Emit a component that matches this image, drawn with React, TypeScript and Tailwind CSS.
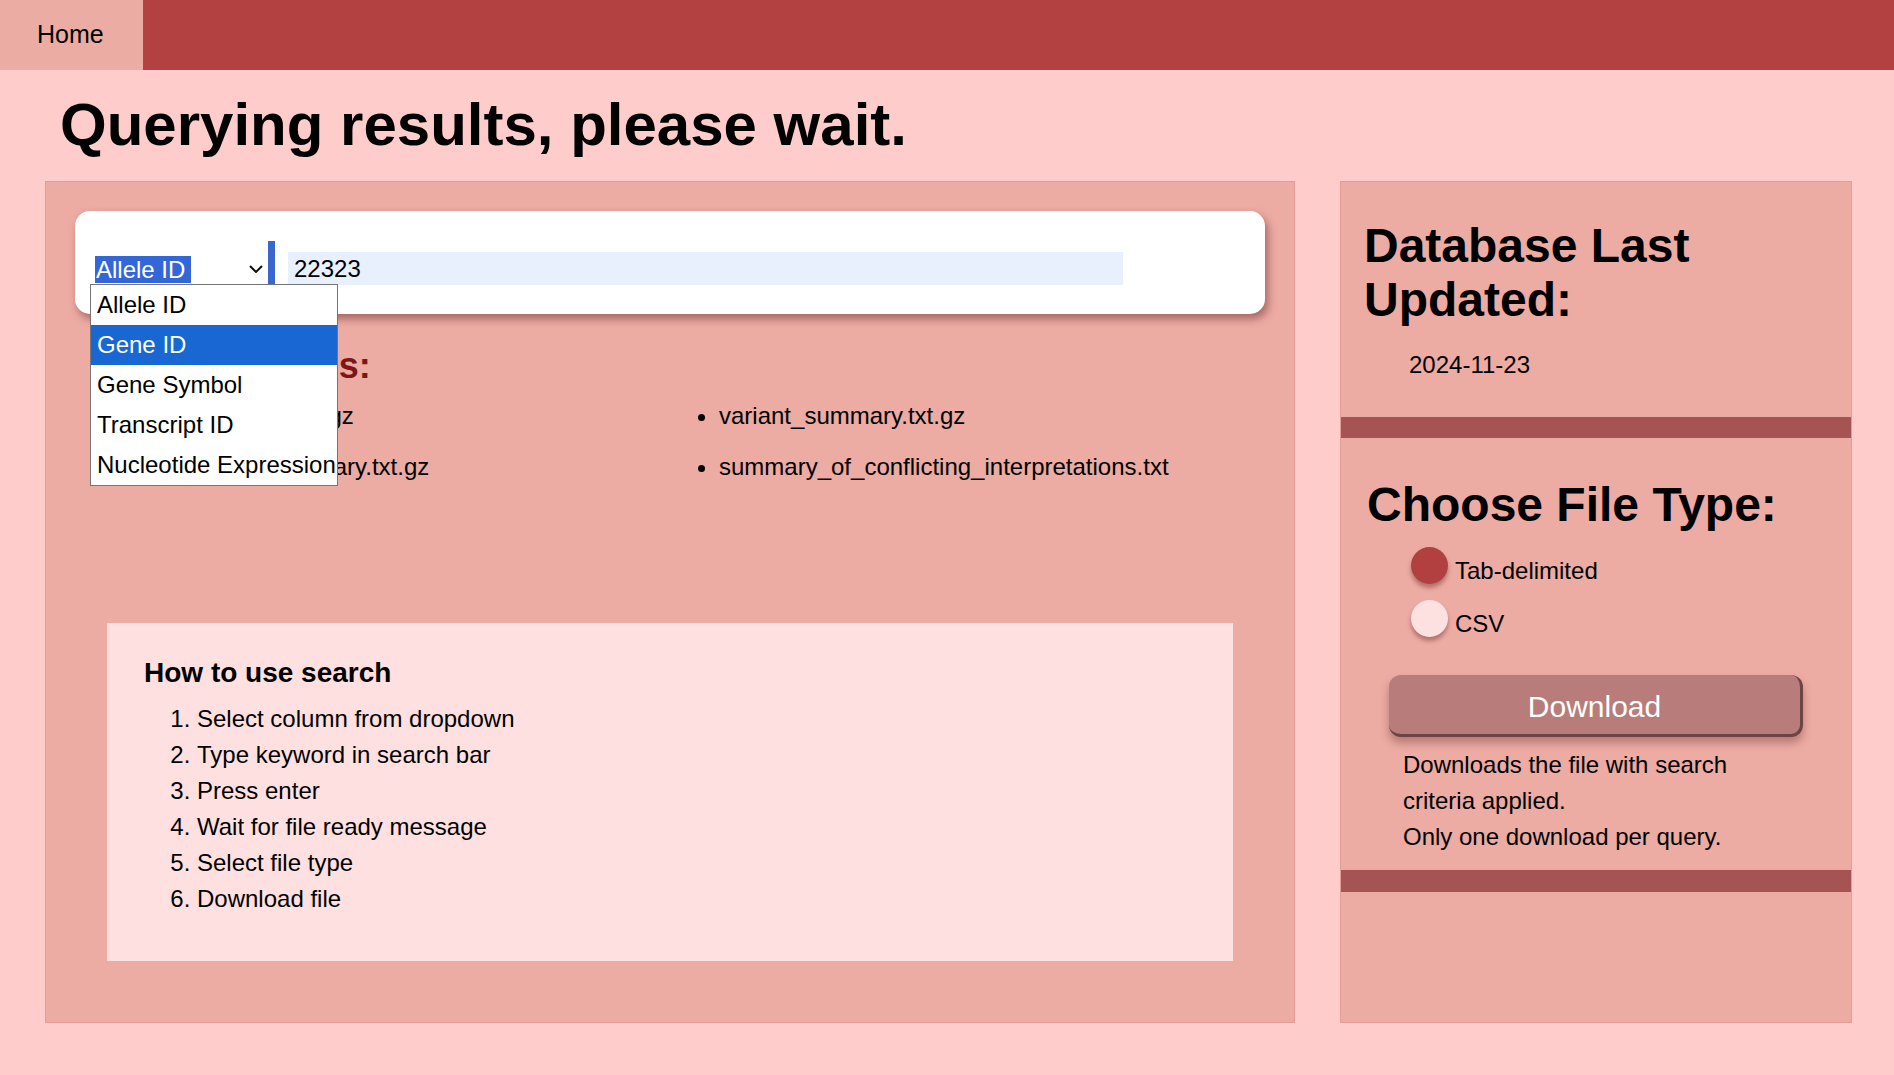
import React from "react";

const files = [
  "hgvs4variation.txt.gz",
  "variant_summary.txt.gz",
  "submission_summary.txt.gz",
  "summary_of_conflicting_interpretations.txt",
];

const columns = ["Allele ID", "Gene ID", "Gene Symbol", "Transcript ID", "Nucleotide Expression"];

const steps = [
  "Select column from dropdown",
  "Type keyword in search bar",
  "Press enter",
  "Wait for file ready message",
  "Select file type",
  "Download file",
];

function SearchCard() {
  return (
    <div className="relative bg-white rounded-[15px] shadow-[3px_5px_9px_rgba(110,50,50,0.55)] pt-[30px] pb-[19px] pl-[15px]">
      <div className="flex items-center h-[54px]">
        {/* column select, opened */}
        <div className="relative flex items-center w-[178px] h-[54px] pl-[5px]">
          <span className="bg-[#3367d6] text-white text-[24px] leading-[27px] pl-[1px] pr-[6px] mt-[2px]">Allele ID</span>
          <svg className="ml-auto mr-[5px] mt-[2px]" width="14" height="8" viewBox="0 0 14 8" fill="none">
            <path d="M1 1l6 6 6-6" stroke="#111" strokeWidth="2" />
          </svg>
          <ul className="absolute left-0 top-[43px] z-10 w-[248px] bg-white border border-[#767676]">
            {columns.map((c, i) => (
              <li
                key={c}
                className={`h-[40px] flex items-center pl-[6px] text-[24px] whitespace-nowrap ${
                  i === 1 ? "bg-[#1967d2] text-white" : "text-black"
                }`}
              >
                {c}
              </li>
            ))}
          </ul>
        </div>
        <div className="w-[7px] h-[54px] bg-[#3a66d0]" />
        <div className="ml-[13px] w-[835px] h-[33px] bg-[#e8f0fe] pl-[6px] text-[24px] leading-[33px] text-black">
          22323
        </div>
      </div>
    </div>
  );
}

function Radio({ label, checked }: { label: string; checked?: boolean }) {
  return (
    <div className="flex items-start">
      <span
        className={`ml-[44px] w-[37px] h-[37px] rounded-full shadow-[0_4px_4px_rgba(110,45,45,0.45)] ${
          checked ? "bg-[#b34040]" : "bg-[#fde0e0]"
        }`}
      />
      <span className="ml-[7px] mt-[6px] text-[24px] leading-[36px]">{label}</span>
    </div>
  );
}

export default function App() {
  return (
    <div className="min-h-screen bg-[#ffcccc] text-black font-['Liberation_Sans',Arial,sans-serif]">
      <nav className="h-[70px] bg-[#b34141] flex">
        <a className="w-[143px] bg-[#ebaca4] flex items-center pl-[37px] text-[25px]">Home</a>
      </nav>

      <h1 className="mt-[20px] ml-[60px] text-[60px] font-bold leading-[69px]">Querying results, please wait.</h1>

      <div className="flex gap-[45px] pl-[45px] mt-[22px]">
        {/* left: search + info */}
        <section className="w-[1250px] h-[842px] bg-[#ecaba3] border border-[#e39d96] p-[29px] flex flex-col">
          <SearchCard />

          <h2 className="mt-[31px] pl-[35px] text-[36px] font-bold leading-[41px] text-[#7b1717]">Available Files:</h2>
          <ul className="mt-[12px] pl-[60px] grid grid-cols-[584px_1fr] gap-y-[15px] list-disc text-[24px] leading-[36px]">
            {files.map((f) => (
              <li key={f}>{f}</li>
            ))}
          </ul>

          <div className="mt-auto mx-[32px] mb-[32px] bg-[#fee0e0] pt-[34px] pl-[37px] pb-[44px]">
            <h3 className="text-[28px] font-bold leading-[32px]">How to use search</h3>
            <ol className="mt-[12px] pl-[53px] list-decimal text-[24px] leading-[36px]">
              {steps.map((s) => (
                <li key={s}>{s}</li>
              ))}
            </ol>
          </div>
        </section>

        {/* right: update date + download */}
        <aside className="w-[512px] h-[842px] bg-[#ecaba3] border border-[#e39d96] flex flex-col">
          <div className="pt-[37px] pl-[23px]">
            <h2 className="text-[48px] font-bold leading-[54px]">
              Database Last
              <br />
              Updated:
            </h2>
            <p className="mt-[20px] pl-[45px] text-[24px] leading-[36px]">2024-11-23</p>
          </div>
          <div className="mt-[34px] h-[21px] bg-[#a65353]" />

          <div className="pt-[40px] pl-[26px]">
            <h2 className="text-[48px] font-bold leading-[54px]">Choose File Type:</h2>
            <div className="mt-[15px] flex flex-col gap-[11px]">
              <Radio label="Tab-delimited" checked />
              <Radio label="CSV" />
            </div>
            <button className="mt-[33px] ml-[22px] w-[414px] h-[62px] pt-[3px] rounded-[12px] bg-[#b87d7b] border-r-[3px] border-b-[3px] border-[#6b4545] shadow-[0_6px_8px_rgba(90,35,35,0.35)] text-white text-[30px]">
              Download
            </button>
            <p className="mt-[10px] ml-[36px] w-[370px] text-[24px] leading-[36px]">
              Downloads the file with search criteria applied.
              <br />
              Only one download per query.
            </p>
          </div>
          <div className="mt-[15px] h-[22px] bg-[#a65353]" />
        </aside>
      </div>
    </div>
  );
}
